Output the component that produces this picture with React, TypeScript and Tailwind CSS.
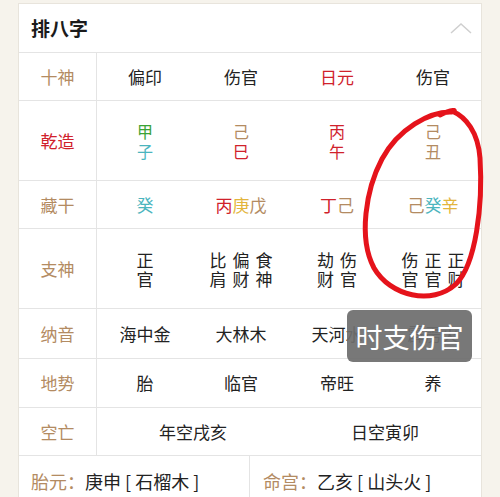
import React from "react";

const FONT = { fontFamily: '"Noto Sans CJK SC", "Noto Sans", sans-serif' };

const TAN = "text-[#b38b62]";
const RED = "text-[#d0212b]";
const GREEN = "text-[#3ba336]";
const TEAL = "text-[#4bb5be]";
const YELLOW = "text-[#e3b53c]";

type Pillar = { gan: [string, string]; zhi: [string, string] };

const PILLARS: Pillar[] = [
  { gan: ["甲", GREEN], zhi: ["子", TEAL] },
  { gan: ["己", TAN], zhi: ["巳", RED] },
  { gan: ["丙", RED], zhi: ["午", RED] },
  { gan: ["己", TAN], zhi: ["丑", TAN] },
];

const CANG: [string, string][][] = [
  [["癸", TEAL]],
  [["丙", RED], ["庚", YELLOW], ["戊", TAN]],
  [["丁", RED], ["己", TAN]],
  [["己", TAN], ["癸", TEAL], ["辛", YELLOW]],
];

// each entry: list of vertical two-char columns
const ZHISHEN: string[][] = [
  ["正官"],
  ["比肩", "偏财", "食神"],
  ["劫财", "伤官"],
  ["伤官", "正官", "正财"],
];

function Label({ text, color = TAN }: { text: string; color?: string }) {
  return (
    <div className={`flex items-center justify-center border-r border-[#e4e4e4] text-[17px] ${color}`}>
      {text}
    </div>
  );
}

function Row({ h, children }: { h: string; children: React.ReactNode }) {
  return (
    <div className={`grid grid-cols-[78px_1fr_1fr_1fr_1fr] border-b border-[#e4e4e4] ${h}`}>
      {children}
    </div>
  );
}

function Cell({ children, className = "" }: { children: React.ReactNode; className?: string }) {
  return (
    <div className={`flex items-center justify-center text-[17px] text-[#222] ${className}`}>{children}</div>
  );
}

export default function App() {
  return (
    <div className="relative w-[500px] h-[497px] overflow-hidden bg-[#f6f3ec] px-[18px] pt-[3px]" style={FONT}>
      <div className="bg-white border border-[#e8e4dc]">
        {/* header */}
        <div className="h-[49px] flex items-center justify-between pl-[12px] pr-[9px] border-b border-[#e4e4e4]">
          <span className="text-[19px] font-bold text-[#1b1b1b]">排八字</span>
          <svg width="22" height="12" viewBox="0 0 22 12" fill="none">
            <path d="M1 11 L11 2 L21 11" stroke="#cfcfcf" strokeWidth="1.5" />
          </svg>
        </div>

        <Row h="h-[48px]">
          <Label text="十神" />
          <Cell>偏印</Cell>
          <Cell>伤官</Cell>
          <Cell className={RED}>日元</Cell>
          <Cell>伤官</Cell>
        </Row>

        <Row h="h-[80px]">
          <Label text="乾造" color={RED} />
          {PILLARS.map((p, i) => (
            <div key={i} className="flex flex-col items-center justify-center text-[16px] leading-[20px]">
              <span className={p.gan[1]}>{p.gan[0]}</span>
              <span className={p.zhi[1]}>{p.zhi[0]}</span>
            </div>
          ))}
        </Row>

        <Row h="h-[48px]">
          <Label text="藏干" />
          {CANG.map((list, i) => (
            <Cell key={i}>
              {list.map(([c, col], j) => (
                <span key={j} className={col}>
                  {c}
                </span>
              ))}
            </Cell>
          ))}
        </Row>

        <Row h="h-[80px]">
          <Label text="支神" />
          {ZHISHEN.map((cols, i) => (
            <div key={i} className="flex items-center justify-center gap-[6px]">
              {cols.map((w, j) => (
                <div key={j} className="flex flex-col text-[17px] leading-[19px] text-[#222]">
                  <span>{w[0]}</span>
                  <span>{w[1]}</span>
                </div>
              ))}
            </div>
          ))}
        </Row>

        <Row h="h-[50px]">
          <Label text="纳音" />
          <Cell>海中金</Cell>
          <Cell>大林木</Cell>
          <Cell>天河水</Cell>
          <Cell>霹雳火</Cell>
        </Row>

        <Row h="h-[49px]">
          <Label text="地势" />
          <Cell>胎</Cell>
          <Cell>临官</Cell>
          <Cell>帝旺</Cell>
          <Cell>养</Cell>
        </Row>

        <Row h="h-[48px]">
          <Label text="空亡" />
          <Cell className="col-span-2">年空戌亥</Cell>
          <Cell className="col-span-2">日空寅卯</Cell>
        </Row>

        <div className="grid grid-cols-2 h-[50px]">
          <div className="flex items-center pl-[12px] border-r border-[#e4e4e4] text-[18px]">
            <span className={TAN}>胎元：</span>
            <span className="text-[#222]">庚申 [ 石榴木 ]</span>
          </div>
          <div className="flex items-center pl-[13px] text-[18px]">
            <span className={TAN}>命宫：</span>
            <span className="text-[#222]">乙亥 [ 山头火 ]</span>
          </div>
        </div>
      </div>

      {/* hand-drawn annotation */}
      <svg className="absolute left-0 top-0 pointer-events-none" width="500" height="497" viewBox="0 0 500 497" fill="none">
        <path
          d="M440 115 C 452 109, 458 110, 452 112 C 430 111, 398 129, 382 159 C 366 189, 358 238, 374 268 C 390 296, 432 306, 456 284 C 476 264, 483 205, 480 158 C 478 132, 466 117, 452 111"
          stroke="#e5131b"
          strokeWidth="5"
          strokeLinecap="round"
          strokeLinejoin="round"
        />
      </svg>

      <div className="absolute left-[347px] top-[310px] w-[125px] h-[52px] rounded-[6px] bg-[rgba(110,110,110,0.93)] flex items-center justify-center text-white text-[27px] leading-none">
        时支伤官
      </div>
    </div>
  );
}
